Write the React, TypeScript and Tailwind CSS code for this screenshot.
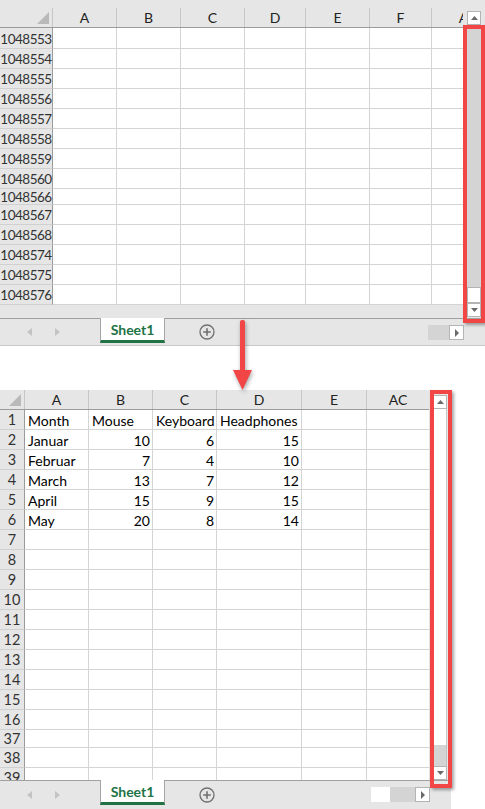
import React from "react";

const cellFont = { fontFamily: "Lato, 'Open Sans', sans-serif" };

function Corner({ w }: { w: string }) {
  return (
    <div className={`${w} h-full relative border-r border-[#c6c6c6] shrink-0`}>
      <svg className="absolute right-[3px] bottom-[3px]" width="12" height="12" viewBox="0 0 12 12">
        <polygon points="12,0 12,12 0,12" fill="#b9b9b9" />
      </svg>
    </div>
  );
}

function UpBtn() {
  return (
    <div className="w-[14px] h-[14px] bg-white border border-[#b4b4b4] flex items-center justify-center shrink-0">
      <svg width="7" height="4" viewBox="0 0 7 4"><polygon points="0,4 7,4 3.5,0" fill="#6a6a6a" /></svg>
    </div>
  );
}
function DownBtn() {
  return (
    <div className="w-[14px] h-[14px] bg-white border border-[#b4b4b4] flex items-center justify-center shrink-0">
      <svg width="7" height="4" viewBox="0 0 7 4"><polygon points="0,0 7,0 3.5,4" fill="#6a6a6a" /></svg>
    </div>
  );
}
function RightBtn() {
  return (
    <div className="w-[15px] h-[15px] bg-white border border-[#b4b4b4] flex items-center justify-center shrink-0">
      <svg width="4" height="8" viewBox="0 0 4 8"><polygon points="0,0 4,4 0,8" fill="#6a6a6a" /></svg>
    </div>
  );
}

function PlusIcon() {
  return (
    <svg width="16" height="16" viewBox="0 0 16 16">
      <circle cx="8" cy="8" r="7" fill="none" stroke="#707070" strokeWidth="1.3" />
      <path d="M8 4.2v7.6M4.2 8h7.6" stroke="#707070" strokeWidth="1.6" />
    </svg>
  );
}

function NavArrows() {
  return (
    <div className="flex items-center w-[100px] shrink-0 pl-[27px] gap-[23px]">
      <svg width="5" height="8" viewBox="0 0 5 8"><polygon points="5,0 5,8 0,4" fill="#c3c3c3" /></svg>
      <svg width="5" height="8" viewBox="0 0 5 8"><polygon points="0,0 5,4 0,8" fill="#c3c3c3" /></svg>
    </div>
  );
}

function SheetTab() {
  return (
    <div className="w-[65px] h-[25px] bg-white border-x border-[#a6a6a6] border-b-[3px] border-b-[#217346] flex items-center justify-center shrink-0 -mt-px">
      <span className="text-[14px] font-bold text-[#217346]" style={cellFont}>Sheet1</span>
    </div>
  );
}

type Col = { w: string; label: string };

const topCols: Col[] = [
  { w: "w-[64px]", label: "A" },
  { w: "w-[64px]", label: "B" },
  { w: "w-[64px]", label: "C" },
  { w: "w-[61px]", label: "D" },
  { w: "w-[64px]", label: "E" },
  { w: "w-[62px]", label: "F" },
  { w: "w-[64px]", label: "A" },
];

const topRows: { n: string; h: string }[] = [
  { n: "1048553", h: "h-[21px]" },
  { n: "1048554", h: "h-[20px]" },
  { n: "1048555", h: "h-[20px]" },
  { n: "1048556", h: "h-[20px]" },
  { n: "1048557", h: "h-[20px]" },
  { n: "1048558", h: "h-[20px]" },
  { n: "1048559", h: "h-[20px]" },
  { n: "1048560", h: "h-[20px]" },
  { n: "1048566", h: "h-[16px]" },
  { n: "1048567", h: "h-[20px]" },
  { n: "1048568", h: "h-[20px]" },
  { n: "1048574", h: "h-[20px]" },
  { n: "1048575", h: "h-[20px]" },
  { n: "1048576", h: "h-[20px]" },
];

function TopSheet() {
  return (
    <div className="w-[485px] h-[346px] bg-[#e6e6e6] flex flex-col shrink-0" style={cellFont}>
      <div className="flex h-[318px]">
        <div className="w-[463px] flex flex-col overflow-hidden pt-[8px]">
          <div className="flex h-[20px] border-b border-[#9b9b9b] shrink-0">
            <Corner w="w-[53px]" />
            {topCols.map((c, i) => (
              <div key={i} className={`${c.w} shrink-0 border-r border-[#c6c6c6] flex items-center justify-center text-[14px] text-[#222]`}>
                {c.label}
              </div>
            ))}
          </div>
          {topRows.map((r) => (
            <div key={r.n} className={`flex ${r.h} shrink-0 border-b border-[#d4d4d4]`}>
              <div className="w-[53px] shrink-0 border-r border-[#9b9b9b] flex items-center justify-center pt-[2px] text-[13.5px] tracking-[-0.5px] text-[#333] -mb-px border-b border-b-[#d0d0d0]">
                {r.n}
              </div>
              {topCols.map((c, i) => (
                <div key={i} className={`${c.w} shrink-0 border-r border-[#d4d4d4] bg-white`} />
              ))}
            </div>
          ))}
        </div>
        <div className="w-[22px] flex flex-col items-center pt-[11px] pb-[1px]">
          <UpBtn />
          <div className="flex-1 w-[14px] bg-[#d4d4d4]" />
          <div className="w-[14px] h-[16px] bg-white border border-[#b4b4b4]" />
          <DownBtn />
        </div>
      </div>
      <div className="flex h-[28px] border-t border-[#a0a0a0] border-b border-b-[#c8c8c8] items-start">
        <div className="flex items-center h-full">
          <NavArrows />
        </div>
        <SheetTab />
        <div className="w-[34px] shrink-0" />
        <div className="h-full flex items-center">
          <PlusIcon />
        </div>
        <div className="flex-1" />
        <div className="flex mt-[6px] mr-[21px]">
          <div className="w-[21px] h-[15px] bg-[#d4d4d4]" />
          <RightBtn />
        </div>
      </div>
    </div>
  );
}

const botCols: Col[] = [
  { w: "w-[64px]", label: "A" },
  { w: "w-[64px]", label: "B" },
  { w: "w-[64px]", label: "C" },
  { w: "w-[85px]", label: "D" },
  { w: "w-[65px]", label: "E" },
  { w: "w-[63px]", label: "AC" },
];

const data: string[][] = [
  ["Month", "Mouse", "Keyboard", "Headphones"],
  ["Januar", "10", "6", "15"],
  ["Februar", "7", "4", "10"],
  ["March", "13", "7", "12"],
  ["April", "15", "9", "15"],
  ["May", "20", "8", "14"],
];

const botRowNums: { n: string; h: string }[] = [
  ...Array.from({ length: 16 }, (_, i) => ({ n: String(i + 1), h: "h-[20px]" })),
  { n: "37", h: "h-[18px]" },
  { n: "38", h: "h-[20px]" },
  { n: "39", h: "h-[20px]" },
];

function BottomSheet() {
  return (
    <div className="w-[451px] h-[419px] bg-[#e6e6e6] flex flex-col shrink-0" style={cellFont}>
      <div className="flex h-[390px]">
        <div className="w-[429px] flex flex-col overflow-hidden">
          <div className="flex h-[20px] border-b border-[#9b9b9b] shrink-0">
            <Corner w="w-[25px]" />
            {botCols.map((c, i) => (
              <div key={i} className={`${c.w} shrink-0 border-r border-[#c6c6c6] flex items-center justify-center text-[14px] text-[#222]`}>
                {c.label}
              </div>
            ))}
          </div>
          {botRowNums.map((r, ri) => {
            const row = data[ri];
            return (
              <div key={r.n} className={`flex ${r.h} shrink-0 border-b border-[#d4d4d4]`}>
                <div className="w-[25px] shrink-0 border-r border-[#9b9b9b] flex items-center justify-center pt-[1px] text-[14.5px] text-[#333] -mb-px border-b border-b-[#d0d0d0]">
                  {r.n}
                </div>
                {botCols.map((c, ci) => {
                  const v = row ? row[ci] : undefined;
                  const isNum = v !== undefined && /^\d+$/.test(v);
                  return (
                    <div
                      key={ci}
                      className={`${c.w} shrink-0 border-r border-[#d4d4d4] bg-white flex items-center pt-[1px] text-[14px] text-black whitespace-nowrap overflow-visible ${isNum ? "justify-end pr-[2px]" : "justify-start pl-[3px]"}`}
                    >
                      {v}
                    </div>
                  );
                })}
              </div>
            );
          })}
        </div>
        <div className="w-[22px] flex flex-col items-center pt-[5px]">
          <UpBtn />
          <div className="flex-1 w-[14px] bg-white border-x border-[#c8c8c8]" />
          <div className="w-[14px] h-[21px] bg-[#d4d4d4] border-x border-[#c0c0c0]" />
          <DownBtn />
        </div>
      </div>
      <div className="flex h-[29px] border-t border-[#a0a0a0] items-start w-[450px]">
        <div className="flex items-center h-full">
          <NavArrows />
        </div>
        <SheetTab />
        <div className="w-[34px] shrink-0" />
        <div className="h-full flex items-center">
          <PlusIcon />
        </div>
        <div className="flex-1" />
        <div className="flex mt-[6px] mr-[20px]">
          <div className="w-[19px] h-[15px] bg-white" />
          <div className="w-[25px] h-[15px] bg-[#d4d4d4]" />
          <RightBtn />
        </div>
      </div>
    </div>
  );
}

export default function App() {
  return (
    <div className="relative w-[485px] h-[809px] bg-white overflow-hidden flex flex-col">
      <TopSheet />
      <div className="h-[44px] shrink-0" />
      <BottomSheet />
      {/* red highlight boxes */}
      <div className="absolute left-[463px] top-[25px] w-[22px] h-[298px] border-[4px] border-[#f24646] shadow-[2px_2px_3px_rgba(0,0,0,0.35)]" />
      <div className="absolute left-[430px] top-[390px] w-[22px] h-[398px] border-[4px] border-[#f24646] shadow-[2px_2px_3px_rgba(0,0,0,0.35)]" />
      {/* arrow */}
      <svg className="absolute left-[231px] top-[318px] drop-shadow-[1px_2px_2px_rgba(0,0,0,0.35)]" width="24" height="76" viewBox="0 0 24 76">
        <rect x="9" y="2" width="5" height="52" rx="2" fill="#f24646" />
        <polygon points="2,52 21,52 11.5,72" fill="#f24646" />
      </svg>
    </div>
  );
}
